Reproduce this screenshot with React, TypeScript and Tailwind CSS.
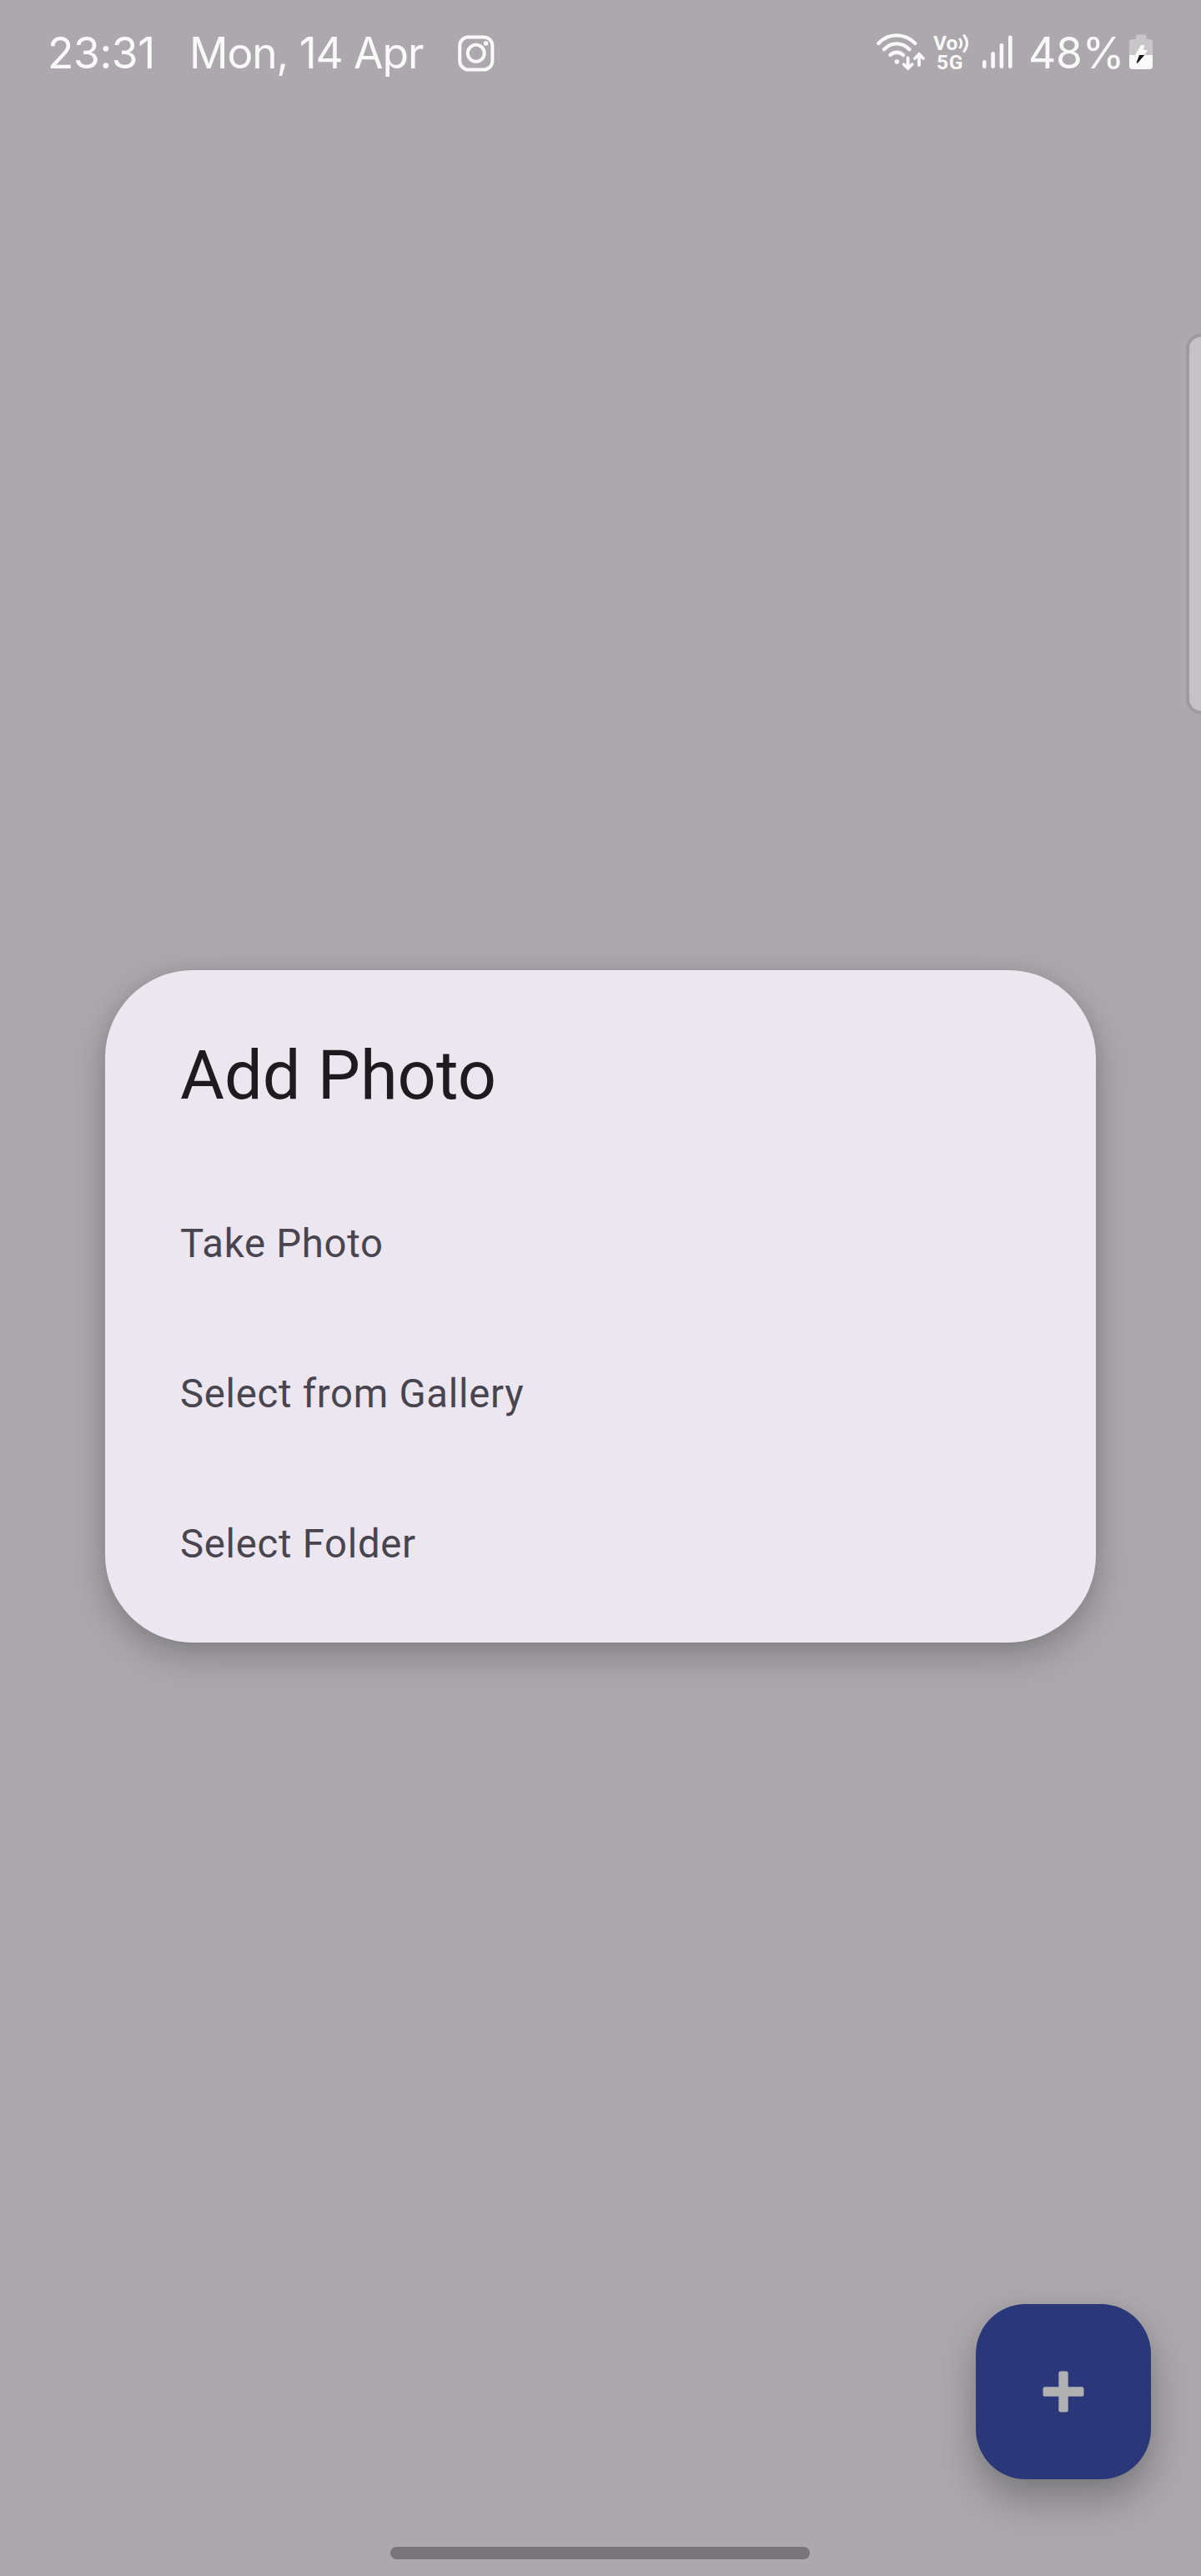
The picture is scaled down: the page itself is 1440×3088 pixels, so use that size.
function InstagramIcon() {
  return (
    <svg className="h-[44px] w-[44px]" viewBox="0 0 44 44" fill="none" stroke="#fafafa" strokeWidth="4">
      <rect x="2.2" y="2.4" width="39.2" height="39.2" rx="10.5" />
      <circle cx="21.8" cy="21.8" r="10" />
      <circle cx="33.6" cy="10" r="2.8" fill="#fafafa" stroke="none" />
    </svg>
  );
}

function WifiIcon() {
  return (
    <svg className="h-[54px] w-[60px]" viewBox="1050 36 60 54" fill="none" stroke="#fafafa" strokeWidth="4.4" strokeLinecap="round">
      <path d="M1053.2 52 Q1062.5 42.4 1075 42.4 T1097.3 52" />
      <path d="M1060 59.2 Q1066.5 52.4 1075 52.4 T1090.4 59.2" />
      <path d="M1067.4 66 Q1070.5 62.8 1075 62.8 T1083 66" />
      <circle cx="1075.4" cy="74" r="2.8" fill="#fafafa" stroke="none" />
      <path d="M1088.6 69.5 V81 M1083.6 77.2 L1088.6 81.8 L1093.6 77.2" strokeWidth="3.8" />
      <path d="M1102 78 V66 M1097 70 L1102 65 L1107 70" strokeWidth="3.8" />
    </svg>
  );
}

function SignalIcon() {
  return (
    <svg className="h-[40px] w-[37px]" viewBox="0 0 37 40" fill="#fafafa">
      <rect x="0" y="30" width="4.6" height="10" rx="2.3" />
      <rect x="10.3" y="20" width="4.6" height="20" rx="2.3" />
      <rect x="20.6" y="10" width="4.6" height="30" rx="2.3" />
      <rect x="31" y="0.5" width="4.6" height="39.5" rx="2.3" />
    </svg>
  );
}

function BatteryIcon() {
  return (
    <svg className="h-[42px] w-[28px]" viewBox="1354 41 28 42">
      <path d="M1362 47 V44 Q1362 41.5 1364.5 41.5 H1372 Q1374.5 41.5 1374.5 44 V47 H1378 Q1382 47 1382 51 V66 H1354 V51 Q1354 47 1358 47 Z" fill="#c8c6c8" />
      <path d="M1354 66 H1382 V79 Q1382 83 1378 83 H1358 Q1354 83 1354 79 Z" fill="#fafafa" />
      <path d="M1368 54 H1372.5 L1370.5 60 H1376 L1372 66 H1361 Z" fill="#fafafa" />
      <path d="M1366 66 H1372.3 L1364 75.5 Q1362.5 76 1362.8 74.5 Z" fill="#161616" />
    </svg>
  );
}

function NetworkBadge() {
  return (
    <span className="ml-[9px] mt-[40px] flex w-[51px] shrink-0 flex-col font-[Roboto,sans-serif] text-[24.5px] font-bold leading-[23px]">
      <span className="flex h-[23px] items-center">
        <span className="w-[29px]">Vo</span>
        <svg className="h-[24px] w-[14px]" viewBox="0 0 14 24" fill="none" stroke="#fafafa" strokeWidth="3" strokeLinecap="round">
          <path d="M3 7 Q6.5 12 3 17 M8 2.5 Q15 12 8 21.5" />
        </svg>
      </span>
      <span className="pl-[4px] tracking-[0.6px]">5G</span>
    </span>
  );
}

function StatusBar() {
  return (
    <header className="flex h-[126px] w-full items-start font-[Inter,sans-serif] text-[51.5px] leading-[60px] text-[#fafafa]">
      <span className="ml-[57px] mt-[33px] w-[170px] shrink-0 whitespace-nowrap tracking-[-0.4px]">23:31</span>
      <span className="mt-[33px] w-[322px] shrink-0 whitespace-nowrap tracking-[-1.1px]">Mon, 14 Apr</span>
      <span className="mt-[42px] shrink-0"><InstagramIcon /></span>
      <span className="ml-auto mt-[36px] shrink-0"><WifiIcon /></span>
      <NetworkBadge />
      <span className="ml-[8px] mt-[42px] shrink-0"><SignalIcon /></span>
      <span className="ml-[18px] mt-[33px] w-[121px] shrink-0 whitespace-nowrap tracking-[-0.2px]">48%</span>
      <span className="mr-[58px] mt-[41px] shrink-0"><BatteryIcon /></span>
    </header>
  );
}

const options = ["Take Photo", "Select from Gallery", "Select Folder"];

export default function App() {
  return (
    <main className="relative flex h-[3088px] w-[1440px] flex-col overflow-hidden bg-[#ada8ad] font-[Roboto,sans-serif]">
      <StatusBar />
      <div className="absolute right-0 top-[404px] h-[448px] w-[14px] rounded-l-[14px] bg-[#c4c2c4] shadow-[0_0_0_4px_#9e9b9e]" />
      <section className="mx-[126px] mt-[1037px] h-[806px] shrink-0 rounded-[105px] bg-[#ece6f0] px-[90px] pt-[91px] shadow-[0_16px_44px_rgba(20,28,24,0.28),0_0_18px_rgba(0,0,0,0.06)]">
        <h1 className="h-[147px] whitespace-nowrap text-[81.2px] leading-[72px] text-[#1d1b20]">Add Photo</h1>
        <ul className="flex flex-col text-[47.3px] tracking-[0.71px] text-[#49454f]">
          {options.map((label) => (
            <li key={label} className="flex h-[180px] items-center whitespace-nowrap">{label}</li>
          ))}
        </ul>
      </section>
      <button className="ml-auto mr-[60px] mt-[793px] flex h-[210px] w-[210px] shrink-0 items-center justify-center rounded-[60px] bg-[#2a3779] shadow-[0_24px_48px_rgba(20,28,24,0.32),0_0_18px_rgba(0,0,0,0.04)]">
        <svg className="h-[50px] w-[50px]" viewBox="0 0 50 50" fill="#b0b0b0">
          <rect x="0.5" y="19.3" width="49" height="11.4" rx="2.5" />
          <rect x="19.3" y="0.5" width="11.4" height="49" rx="2.5" />
        </svg>
      </button>
      <div className="ml-[468px] mt-[81px] h-[15px] w-[503px] shrink-0 rounded-full bg-[#777578]" />
    </main>
  );
}
